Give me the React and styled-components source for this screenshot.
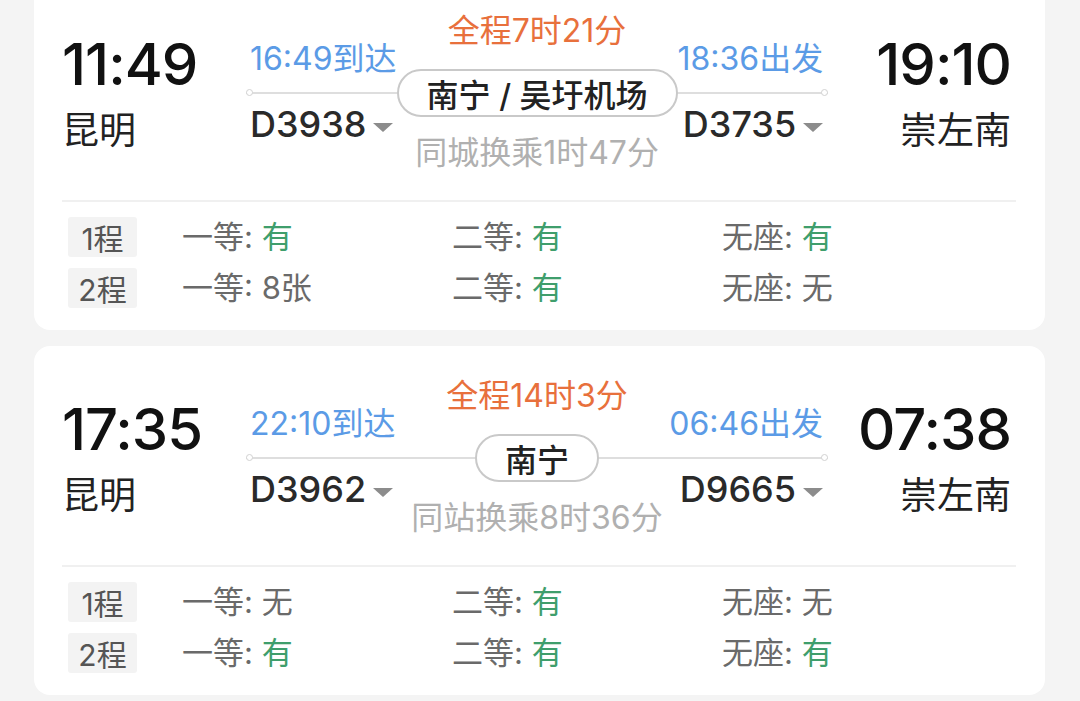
import React from 'react'
import styled, { createGlobalStyle } from 'styled-components'

const GlobalStyle = createGlobalStyle`
  body {
    margin: 0;
    background: #f4f4f4;
    font-family: Inter, "Noto Sans CJK SC", sans-serif;
    overflow: hidden;
  }
`

const trips = [
  {
    dep: '11:49',
    from: '昆明',
    arr: '19:10',
    to: '崇左南',
    total: '全程7时21分',
    arrive: '16:49到达',
    train1: 'D3938',
    hub: '南宁 / 吴圩机场',
    transfer: '同城换乘1时47分',
    depart: '18:36出发',
    train2: 'D3735',
    seats: [
      [['一等', '有'], ['二等', '有'], ['无座', '有']],
      [['一等', '8张'], ['二等', '有'], ['无座', '无']],
    ],
  },
  {
    dep: '17:35',
    from: '昆明',
    arr: '07:38',
    to: '崇左南',
    total: '全程14时3分',
    arrive: '22:10到达',
    train1: 'D3962',
    hub: '南宁',
    transfer: '同站换乘8时36分',
    depart: '06:46出发',
    train2: 'D9665',
    seats: [
      [['一等', '无'], ['二等', '有'], ['无座', '无']],
      [['一等', '有'], ['二等', '有'], ['无座', '有']],
    ],
  },
]

const TripCard = ({ trip }) => (
  <Card>
    <Top>
      <End>
        <Time>{trip.dep}</Time>
        <City>{trip.from}</City>
      </End>
      <Middle>
        <Duration>{trip.total}</Duration>
        <Track>
          <Leg>
            <Clock>{trip.arrive}</Clock>
            <Rail side="left" />
            <Train>
              {trip.train1}
              <Caret />
            </Train>
          </Leg>
          <Hub>
            <Station>{trip.hub}</Station>
            <Transfer>{trip.transfer}</Transfer>
          </Hub>
          <Leg right>
            <Clock>{trip.depart}</Clock>
            <Rail side="right" />
            <Train>
              {trip.train2}
              <Caret />
            </Train>
          </Leg>
        </Track>
      </Middle>
      <End right>
        <Time>{trip.arr}</Time>
        <City>{trip.to}</City>
      </End>
    </Top>
    <Seats>
      {trip.seats.map((row, i) => (
        <SeatRow key={i}>
          <Badge>{i + 1}程</Badge>
          {row.map(([label, value]) => (
            <Seat key={label}>
              {label}: <Value ok={value === '有'}>{value}</Value>
            </Seat>
          ))}
        </SeatRow>
      ))}
    </Seats>
  </Card>
)

const App = () => (
  <>
    <GlobalStyle />
    <Page>
      {trips.map((t) => (
        <TripCard key={t.dep} trip={t} />
      ))}
    </Page>
  </>
)

const Page = styled.div`
  display: flex;
  flex-direction: column;
  gap: 16px;
  padding: 0 35px 0 34px;
  margin-top: -19px;
`

const Card = styled.div`
  background: #fff;
  border-radius: 16px;
  padding: 35px 29px 22px 28px;
`

const Top = styled.div`
  display: grid;
  grid-template-columns: 184px 582px 1fr;
  padding-bottom: 27px;
  border-bottom: 2px solid #f0f0f0;
`

const End = styled.div`
  display: flex;
  flex-direction: column;
  align-items: ${({ right }) => (right ? 'flex-end' : 'flex-start')};
  padding-top: 19px;
  padding-right: ${({ right }) => (right ? '5px' : '0')};
`

const Time = styled.div`
  font-size: 58px;
  line-height: 58px;
  font-weight: 500;
  color: #111;
  letter-spacing: -1px;
`

const City = styled.div`
  margin-top: 16px;
  font-size: 37px;
  line-height: 44px;
  color: #222;
`

const Middle = styled.div`
  display: flex;
  flex-direction: column;
`

const Duration = styled.div`
  text-align: center;
  font-size: 32px;
  line-height: 30px;
  color: #e8703c;
  margin-bottom: -2px;
`

const Track = styled.div`
  display: grid;
  grid-template-columns: 1fr auto 1fr;
  align-items: start;
`

const Clock = styled.div`
  font-size: 32px;
  line-height: 30px;
  color: #5b9be6;
  white-space: nowrap;
`

const Train = styled.div`
  display: flex;
  align-items: center;
  gap: 7px;
  font-size: 36px;
  line-height: 36px;
  font-weight: 500;
  color: #2a2a2a;
`

const Leg = styled.div`
  display: flex;
  flex-direction: column;
  align-items: ${({ right }) => (right ? 'flex-end' : 'flex-start')};

  & > ${Clock}, & > ${Train} {
    padding: ${({ right }) => (right ? '0 5px 0 0' : '0 0 0 4px')};
  }
`

const Rail = styled.div`
  align-self: stretch;
  height: 8px;
  margin: 15px 0 9px;
  background: linear-gradient(#dedede, #dedede) no-repeat 0 3px / 100% 2px;
  display: flex;
  justify-content: ${({ side }) => (side === 'left' ? 'flex-start' : 'flex-end')};

  &::before {
    content: '';
    width: 5px;
    height: 5px;
    border: 1.5px solid #d2d2d2;
    border-radius: 50%;
    background: #fff;
  }
`

const Caret = styled.span`
  width: 0;
  height: 0;
  margin-top: 6px;
  border-left: 10px solid transparent;
  border-right: 10px solid transparent;
  border-top: 9px solid #8c8c8c;
`

const Hub = styled.div`
  display: flex;
  flex-direction: column;
  align-items: center;
  padding-top: 25px;
  background: linear-gradient(#dedede, #dedede) no-repeat 0 48px / 100% 2px;
`

const Station = styled.div`
  height: 44px;
  display: flex;
  align-items: center;
  padding: 0 28px;
  border: 2px solid #c9c9c9;
  border-radius: 26px;
  background: #fff;
  font-size: 32px;
  font-weight: 500;
  color: #222;
  white-space: nowrap;
`

const Transfer = styled.div`
  margin-top: 16px;
  font-size: 32px;
  line-height: 40px;
  color: #b0b0b0;
  white-space: nowrap;
`

const Seats = styled.div`
  display: flex;
  flex-direction: column;
  gap: 11px;
  padding-top: 15px;
`

const SeatRow = styled.div`
  display: grid;
  grid-template-columns: 114px 270px 270px 1fr;
  align-items: center;
  padding-left: 6px;
`

const Badge = styled.div`
  width: 69px;
  height: 40px;
  display: flex;
  align-items: center;
  justify-content: center;
  background: #f3f3f3;
  border-radius: 3px;
  font-size: 30px;
  color: #555;
`

const Seat = styled.div`
  font-size: 31px;
  line-height: 40px;
  color: #6a6a6a;
`

const Value = styled.span`
  color: ${({ ok }) => (ok ? '#3f9e6c' : '#6a6a6a')};
`

export default App
